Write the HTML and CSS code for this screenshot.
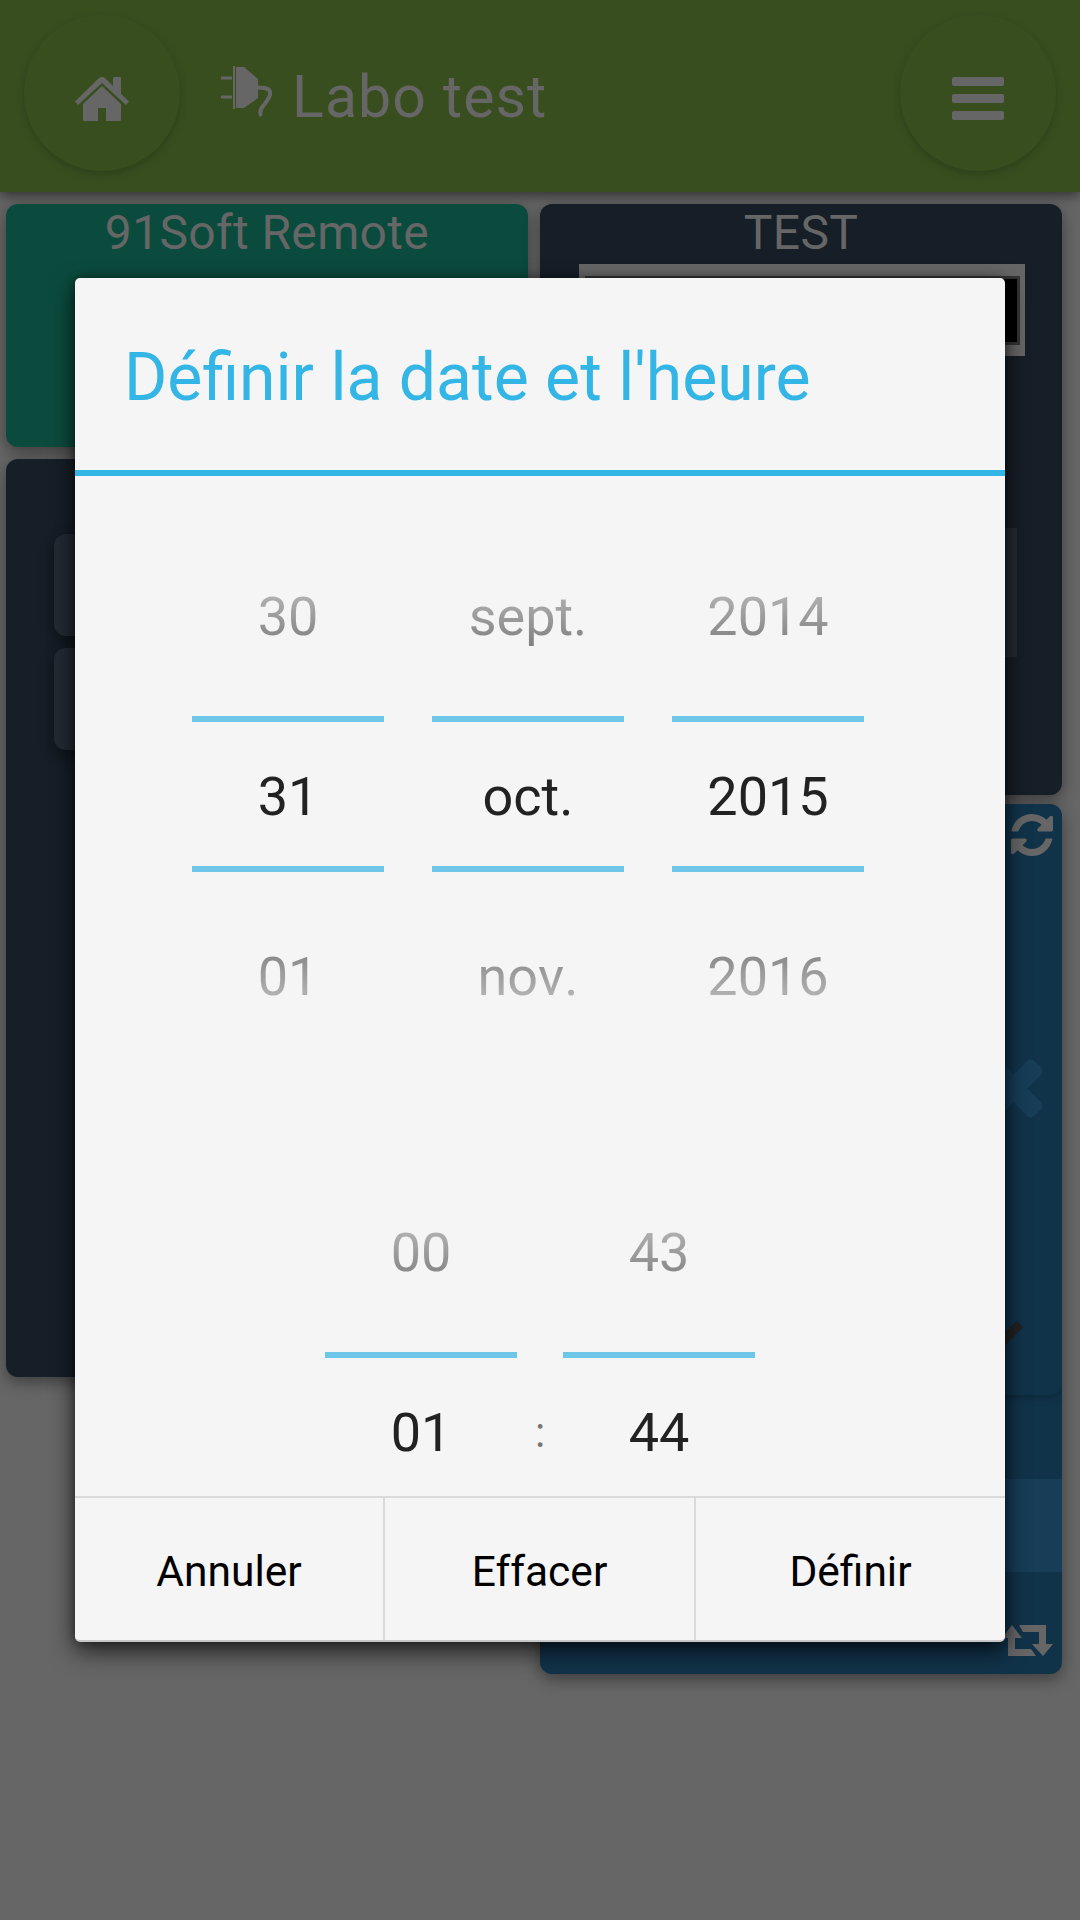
FILE: index.html
```html
<!DOCTYPE html>
<html lang="fr">
<head>
<meta charset="utf-8">
<title>Labo test</title>
<link rel="stylesheet" href="styles.css">
</head>
<body>
<header class="bar">
  <span class="round"><svg class="home" viewBox="0 0 54 44"><path d="M27 0q2 0 3.500 1.400L38 9V1q0-1 1-1h6q1 0 1 1v16l8 7.500-3 3.500L27 6 3 28l-3-3.500L23.500 1.400Q25 0 27 0zM27 9l19 18v15.500q0 1.500-1.500 1.500H31V31h-8v13H9.500Q8 44 8 42.500V27z"/></svg></span>
  <svg class="plug" viewBox="0 0 52 51"><path d="M13 0h2v43H13zM16 1h8l14 12v19L24 42h-8z"/><path class="wire" d="M1 12h11M1 31h11"/><path class="cord" d="M38 21.500c9 0 15 2 11 10s-10 10-8.500 17"/></svg>
  <h1 class="name"><span>Labo test</span></h1>
  <span class="round"><svg class="menu" viewBox="0 0 52 43"><rect width="52" height="9" rx="2"/><rect y="17" width="52" height="9" rx="2"/><rect y="34" width="52" height="9" rx="2"/></svg></span>
</header>
<main class="board">
  <div class="column">
    <section class="card remote"><h2>91Soft Remote</h2></section>
    <section class="card controls"><div class="control"></div><div class="control"></div></section>
  </div>
  <div class="column right">
    <section class="card test"><h2>TEST</h2><div class="frame"><div class="screen"></div></div><div class="field"></div></section>
    <section class="card blue">
      <div class="upper">
        <svg class="refresh" viewBox="0 0 1536 1536"><path d="M1511 928q0 5-1 7-64 268-268 434.500T764 1536q-146 0-282.500-55T238 1324l-129 129q-19 19-45 19t-45-19-19-45V960q0-26 19-45t45-19h448q26 0 45 19t19 45-19 45l-137 137q71 66 161 102t187 36q134 0 250-65t186-179q11-17 53-117 8-23 30-23h192q13 0 22.500 9.500t9.500 22.500zm25-800v448q0 26-19 45t-45 19h-448q-26 0-45-19t-19-45 19-45l138-138Q969 256 768 256q-134 0-250 65T332 500q-11 17-53 117-8 23-30 23H50q-13 0-22.500-9.500T18 608v-7q65-268 270-434.500T768 0q146 0 284 55.500T1297 212l130-129q19-19 45-19t45 19 19 45z"/></svg>
        <svg class="cross" viewBox="-28.500 -28.500 57 57"><rect x="-34" y="-9.800" width="68" height="19.600" rx="5" transform="rotate(45)"/><rect x="-34" y="-9.800" width="68" height="19.600" rx="5" transform="rotate(-45)"/></svg>
        <svg class="needle" viewBox="0 0 30 30"><path d="M27 3L3 27"/></svg>
      </div>
      <div class="band"></div>
      <svg class="retweet" viewBox="0 0 50 31"><path d="M9 0L19 13H12V24h16l5 7H5V13H-1zM16 0h27v19h7L40 31 29 19h7V7H20z"/></svg>
    </section>
  </div>
</main>
<div class="dialog">
  <h2 class="title"><span>Définir la date et l'heure</span></h2>
  <div class="pickers">
    <div class="date">
      <div class="wheel"><span class="before">30</span><span class="now">31</span><span class="after">01</span></div>
      <div class="wheel"><span class="before">sept.</span><span class="now">oct.</span><span class="after">nov.</span></div>
      <div class="wheel"><span class="before">2014</span><span class="now">2015</span><span class="after">2016</span></div>
    </div>
    <div class="time">
      <div class="wheel"><span class="before">00</span><span class="now">01</span></div>
      <span class="colon">:</span>
      <div class="wheel"><span class="before">43</span><span class="now">44</span></div>
    </div>
  </div>
  <div class="actions"><button>Annuler</button><button>Effacer</button><button>Définir</button></div>
</div>
</body>
</html>
```
FILE: styles.css
```css
* { box-sizing: border-box; }
body { margin: 0; width: 1080px; height: 1920px; overflow: hidden; position: relative; background: #666; font-family: Roboto, sans-serif; color: #666; }
h1, h2 { margin: 0; font-weight: 400; }
svg { display: block; fill: #666; overflow: visible; }
.bar { height: 192px; padding: 15px 24px 0 24px; display: flex; align-items: flex-start; background: #384e1f; box-shadow: 0 3px 12px rgba(0,0,0,.55); }
.round { width: 156px; height: 156px; border-radius: 50%; flex: none; display: flex; justify-content: center; padding-top: 62px; box-shadow: 0 3px 8px rgba(0,0,0,.2); }
.home { width: 54px; height: 44px; }
.menu { width: 52px; height: 43px; }
.plug { width: 52px; height: 51px; margin: 51px 0 0 40px; flex: none; }
.wire { fill: none; stroke: #666; stroke-width: 3; }
.cord { fill: none; stroke: #666; stroke-width: 4; stroke-linecap: round; }
.name { margin: 47px 0 0 20px; font-size: 59px; line-height: 70px; flex: 1; letter-spacing: 1.1px; }
.board { display: flex; gap: 12px; padding: 12px 18px 0 6px; }
.column { width: 522px; display: flex; flex-direction: column; gap: 12px; }
.right { gap: 9px; }
.card { border-radius: 12px; box-shadow: 0 5px 16px rgba(0,0,0,.4); overflow: hidden; flex: none; }
.card h2 { font-size: 48px; line-height: 56px; padding-top: 1px; text-align: center; letter-spacing: .35px; }
.remote { height: 243px; background: #0b4b3d; }
.controls { height: 918px; background: #161e27; padding: 75px 48px; display: flex; flex-direction: column; gap: 12px; }
.control { height: 102px; border-radius: 12px; background: #232a33; box-shadow: 0 5px 14px rgba(0,0,0,.4); }
.test { height: 591px; background: #161e27; }
.frame { margin: 3px 37px 0 39px; height: 92px; padding: 12px 5px 11px 6px; background: #666; }
.screen { height: 69px; border: 3px solid #333; background: #000; }
.field { margin: 172px 45px 0; height: 129px; background: #232b34; }
.blue { height: 870px; background: #11334a; }
.upper { height: 591px; border-radius: 12px; box-shadow: 0 2px 8px rgba(0,0,0,.25); display: flex; flex-direction: column; align-items: flex-end; }
.refresh { width: 42px; height: 42px; margin: 10px 9px 0 0; }
.cross { width: 57px; height: 57px; margin: 204px 20px 0 0; fill: #173d57; }
.needle { width: 30px; height: 30px; margin: 204px 39px 0 0; }
.needle path { stroke: #222; stroke-width: 9; }
.band { height: 93px; margin-top: 84px; background: #173d57; }
.retweet { width: 50px; height: 31px; margin: 53px 9px 0 auto; }
.dialog { position: absolute; left: 75px; top: 278px; width: 930px; height: 1364px; border-radius: 5px; overflow: hidden; background: #f5f5f5; display: flex; flex-direction: column; border-bottom: 2px solid #c8c8c8; box-shadow: 0 9px 24px rgba(0,0,0,.7), 0 0 10px rgba(0,0,0,.3); }
.title { height: 198px; border-bottom: 6px solid #33b5e5; padding: 61px 49px 0; line-height: 78px; font-size: 66.100px; color: #33b5e5; }
.pickers { height: 1020px; overflow: hidden; }
.date { display: flex; gap: 48px; padding: 60px 0 0 117px; height: 636px; }
.time { display: flex; padding: 60px 0 0 250px; }
.wheel { width: 192px; height: 516px; display: flex; flex-direction: column; align-items: center; font-size: 54px; line-height: 72px; font-kerning: none; color: #222; }
.wheel span { width: 100%; text-align: center; }
.now { height: 156px; border-top: 6px solid #6ec7e9; border-bottom: 6px solid #6ec7e9; padding-top: 39px; }
.before, .after { height: 180px; color: transparent; background-clip: text; }
.before { padding-top: 45px; background-image: linear-gradient(#ccc 0, #b0b0b0 60px, #888 101px, #777 125px); }
.after { padding-top: 69px; background-image: linear-gradient(#777 50px, #888 81px, #b0b0b0 122px, #ccc 150px); }
.colon { width: 46px; text-align: center; font-size: 42px; line-height: 72px; margin-top: 225px; color: #777; }
.actions { flex: 1; display: flex; border-top: 2px solid #dadada; }
.actions button { flex: 1; border: 0; border-right: 2px solid #dadada; background: none; font: 42.500px/50px Roboto, sans-serif; color: #000; padding: 5px 0 0; }
.actions button:first-child { flex: 0 0 310px; }
.actions button:last-child { border: 0; }
```
